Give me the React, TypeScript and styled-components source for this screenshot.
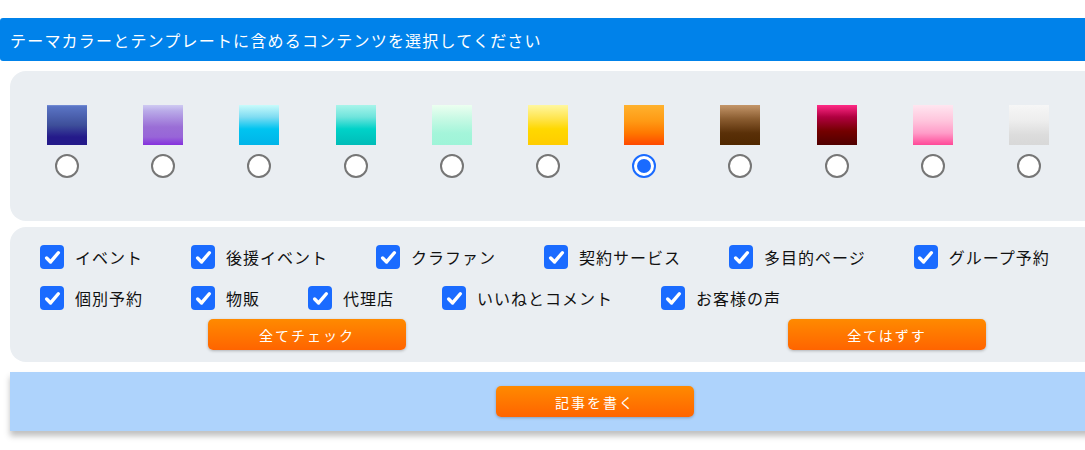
import React, { useState } from "react";
import styled, { createGlobalStyle } from "styled-components";

const Global = createGlobalStyle`
  html, body { margin: 0; padding: 0; background: #ffffff; overflow: hidden; }
  body { font-family: "Noto Sans CJK JP", "Noto Sans", sans-serif; }
`;

const Page = styled.div`
  width: 1180px;
  padding-top: 18px;
  padding-bottom: 20px;
  display: flex;
  flex-direction: column;
`;

const Header = styled.div`
  height: 43px;
  background: #0082ea;
  border-radius: 3px 0 0 3px;
  color: #ffffff;
  font-size: 16px;
  letter-spacing: 1.2px;
  display: flex;
  align-items: center;
  padding-left: 10px;
  margin-bottom: 10px;
`;

const Panel = styled.div<{ $pt: number; $pb: number; $pl: number }>`
  margin-left: 10px;
  width: 1170px;
  box-sizing: border-box;
  background: #eaeef2;
  border-radius: 16px;
  padding: ${(p) => p.$pt}px 0 ${(p) => p.$pb}px ${(p) => p.$pl}px;
  margin-bottom: 6px;
`;

const SwatchGrid = styled.div`
  display: grid;
  grid-template-columns: repeat(11, 96.2px);
`;

const SwatchCell = styled.label`
  display: flex;
  flex-direction: column;
  align-items: center;
  gap: 9px;
  cursor: pointer;
`;

const Swatch = styled.div<{ $g: string }>`
  width: 40px;
  height: 40px;
  background: ${(p) => p.$g};
`;

const Radio = styled.span<{ $on: boolean }>`
  width: 24px;
  height: 24px;
  box-sizing: border-box;
  border-radius: 50%;
  background: #ffffff;
  border: 2px solid ${(p) => (p.$on ? "#1a6bff" : "#767676")};
  display: flex;
  align-items: center;
  justify-content: center;
  &::after {
    content: "";
    width: 14px;
    height: 14px;
    border-radius: 50%;
    background: ${(p) => (p.$on ? "#1a6bff" : "transparent")};
  }
`;

const CheckWrap = styled.div`
  display: flex;
  flex-wrap: wrap;
  row-gap: 17px;
  padding-right: 40px;
`;

const CheckItem = styled.label`
  display: flex;
  align-items: center;
  gap: 11px;
  margin-right: 48px;
  font-size: 16px;
  letter-spacing: 1px;
  color: #111111;
  height: 24px;
  cursor: pointer;
`;

const Box = styled.span<{ $on: boolean }>`
  width: 24px;
  height: 24px;
  border-radius: 4px;
  background: ${(p) => (p.$on ? "#1a6bff" : "#ffffff")};
  border: ${(p) => (p.$on ? "none" : "2px solid #767676")};
  box-sizing: border-box;
  display: flex;
  align-items: center;
  justify-content: center;
`;

const ButtonRow = styled.div`
  display: grid;
  grid-template-columns: 1fr 1fr;
  justify-items: center;
  margin: 9px 0 0 -23px;
  width: 1160px;
`;

const OrangeButton = styled.button`
  width: 198px;
  height: 31px;
  border: none;
  border-radius: 5px;
  background: linear-gradient(#ff8a00, #ff6400);
  color: #ffffff;
  font-family: "Noto Sans CJK JP", "Noto Sans", sans-serif;
  font-size: 14px;
  letter-spacing: 2px;
  box-shadow: 0 1px 3px rgba(0, 0, 0, 0.25);
  cursor: pointer;
  padding: 0;
`;

const Footer = styled.div`
  margin-left: 10px;
  margin-top: 4px;
  width: 1170px;
  height: 59px;
  background: #aed3fc;
  box-shadow: 0 5px 6px rgba(0, 0, 0, 0.25);
  display: flex;
  justify-content: center;
  align-items: center;
  box-sizing: border-box;
`;

const colors = [
  "linear-gradient(#7a92d8 0%, #5a74c4 4%, #3e4f9a 50%, #241a8a 80%, #241a8a 100%)",
  "linear-gradient(#cfcaf2 0%, #b9aae8 15%, #9a6ed6 55%, #9865d8 80%, #8530dd 100%)",
  "linear-gradient(#c8fbfb 0%, #7fdcf2 30%, #00c4f0 60%, #00b4e8 100%)",
  "linear-gradient(#a8f4ea 0%, #6fe4dc 30%, #00d2c8 60%, #00bcb8 100%)",
  "linear-gradient(#ecfff0 0%, #c6f9e4 35%, #a4f5da 70%, #9ef4d8 100%)",
  "linear-gradient(#fff7a0 0%, #ffe44a 35%, #ffd800 60%, #ffcc00 100%)",
  "linear-gradient(#ffb22e 0%, #ff9a14 40%, #ff7800 70%, #ff4800 100%)",
  "linear-gradient(#c4966a 0%, #8a5c30 35%, #5a3008 70%, #502800 100%)",
  "linear-gradient(#ff2a86 0%, #b00040 30%, #740000 65%, #500000 100%)",
  "linear-gradient(#ffe6f0 0%, #ffc4dc 40%, #ff9cc8 70%, #ff4898 100%)",
  "linear-gradient(#f6f6f6 0%, #ededed 40%, #dcdcdc 75%, #d8d8d8 100%)",
];

const items = [
  "イベント",
  "後援イベント",
  "クラファン",
  "契約サービス",
  "多目的ページ",
  "グループ予約",
  "個別予約",
  "物販",
  "代理店",
  "いいねとコメント",
  "お客様の声",
];

const Check = () => (
  <svg width="17" height="17" viewBox="0 0 16 16">
    <path d="M2.5 8.5 L6.2 12.2 L13.5 3.5" fill="none" stroke="#ffffff" strokeWidth="3.2" strokeLinecap="round" strokeLinejoin="round" />
  </svg>
);

export default function App() {
  const [sel, setSel] = useState(6);
  const [checked, setChecked] = useState<boolean[]>(items.map(() => true));
  return (
    <>
      <Global />
      <Page>
        <Header>テーマカラーとテンプレートに含めるコンテンツを選択してください</Header>
        <Panel $pt={34} $pb={43} $pl={9}>
          <SwatchGrid>
            {colors.map((c, i) => (
              <SwatchCell key={i} onClick={() => setSel(i)}>
                <Swatch $g={c} />
                <Radio $on={sel === i} />
              </SwatchCell>
            ))}
          </SwatchGrid>
        </Panel>
        <Panel $pt={18} $pb={12} $pl={30}>
          <CheckWrap>
            {items.map((t, i) => (
              <CheckItem
                key={t}
                onClick={() => setChecked((c) => c.map((v, j) => (j === i ? !v : v)))}
              >
                <Box $on={checked[i]}>{checked[i] && <Check />}</Box>
                {t}
              </CheckItem>
            ))}
          </CheckWrap>
          <ButtonRow>
            <OrangeButton onClick={() => setChecked(items.map(() => true))}>全てチェック</OrangeButton>
            <OrangeButton onClick={() => setChecked(items.map(() => false))}>全てはずす</OrangeButton>
          </ButtonRow>
        </Panel>
        <Footer>
          <OrangeButton>記事を書く</OrangeButton>
        </Footer>
      </Page>
    </>
  );
}
